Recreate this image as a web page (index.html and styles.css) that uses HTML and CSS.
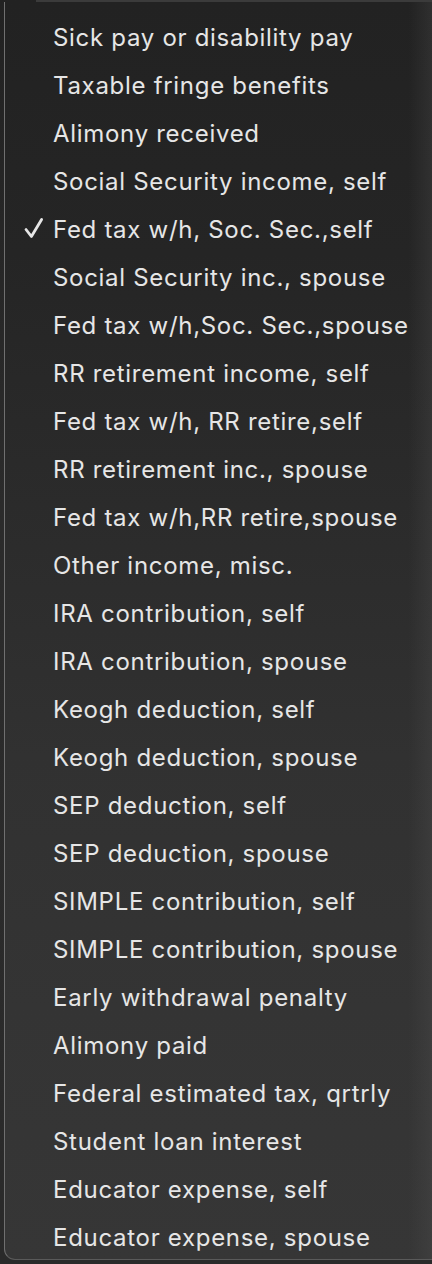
FILE: index.html
```html
<!DOCTYPE html>
<html lang="en">
<head>
<meta charset="utf-8">
<title>Menu</title>
<link rel="stylesheet" href="styles.css">
</head>
<body>
<div class="screen">
  <div class="behind">
    <div class="topbar"></div>
  </div>
  <div class="menu">
    <ul class="items">
      <li class="item">Sick pay or disability pay</li>
      <li class="item">Taxable fringe benefits</li>
      <li class="item">Alimony received</li>
      <li class="item">Social Security income, self</li>
      <li class="item checked"><svg class="check" viewBox="0 0 20 22" width="20" height="22"><path d="M2 12.5 L7.4 19.5 L17.6 2.5" fill="none" stroke="currentColor" stroke-width="2.8" stroke-linecap="round" stroke-linejoin="round"/></svg>Fed tax w/h, Soc. Sec.,self</li>
      <li class="item">Social Security inc., spouse</li>
      <li class="item">Fed tax w/h,Soc. Sec.,spouse</li>
      <li class="item">RR retirement income, self</li>
      <li class="item">Fed tax w/h, RR retire,self</li>
      <li class="item">RR retirement inc., spouse</li>
      <li class="item">Fed tax w/h,RR retire,spouse</li>
      <li class="item">Other income, misc.</li>
      <li class="item">IRA contribution, self</li>
      <li class="item">IRA contribution, spouse</li>
      <li class="item">Keogh deduction, self</li>
      <li class="item">Keogh deduction, spouse</li>
      <li class="item">SEP deduction, self</li>
      <li class="item">SEP deduction, spouse</li>
      <li class="item">SIMPLE contribution, self</li>
      <li class="item">SIMPLE contribution, spouse</li>
      <li class="item">Early withdrawal penalty</li>
      <li class="item">Alimony paid</li>
      <li class="item">Federal estimated tax, qrtrly</li>
      <li class="item">Student loan interest</li>
      <li class="item">Educator expense, self</li>
      <li class="item">Educator expense, spouse</li>
    </ul>
  </div>
</div>
</body>
</html>
```

FILE: styles.css
```css
html, body {
  margin: 0;
  padding: 0;
  background: #1f1f1f;
}
.screen {
  position: relative;
  width: 432px;
  height: 1264px;
  overflow: hidden;
  background: linear-gradient(180deg, #222 0%, #2b2b2b 40%, #2a2a2a 100%);
}
.behind {
  position: absolute;
  inset: 0;
}
.topbar {
  position: absolute;
  top: 0;
  left: 36px;
  right: 0;
  height: 2px;
  background: #3b3b3b;
}
.menu {
  position: absolute;
  top: 2px;
  left: 4px;
  width: 440px;
  height: 1258px;
  box-sizing: border-box;
  border-left: 1.5px solid #707070;
  border-bottom: 1px solid #5a5a5a;
  border-bottom-left-radius: 11px;
  background:
    linear-gradient(90deg, rgba(0,0,0,0) 0%, rgba(0,0,0,0) 92%, rgba(90,90,90,0.35) 100%),
    linear-gradient(180deg, #222 0%, #252525 20%, #2b2b2b 40%, #313131 60%, #343434 80%, #363636 100%);
}
.items {
  list-style: none;
  margin: 0;
  padding: 11px 0 0 0;
}
.item {
  position: relative;
  height: 48px;
  display: flex;
  align-items: center;
  padding-left: 48px;
  font-family: Inter, "Noto Sans", sans-serif;
  font-size: 24px;
  letter-spacing: 0.7px;
  color: #e6e6e6;
  white-space: nowrap;
}
.check {
  position: absolute;
  left: 19px;
  top: 12px;
  color: #e6e6e6;
}
```
